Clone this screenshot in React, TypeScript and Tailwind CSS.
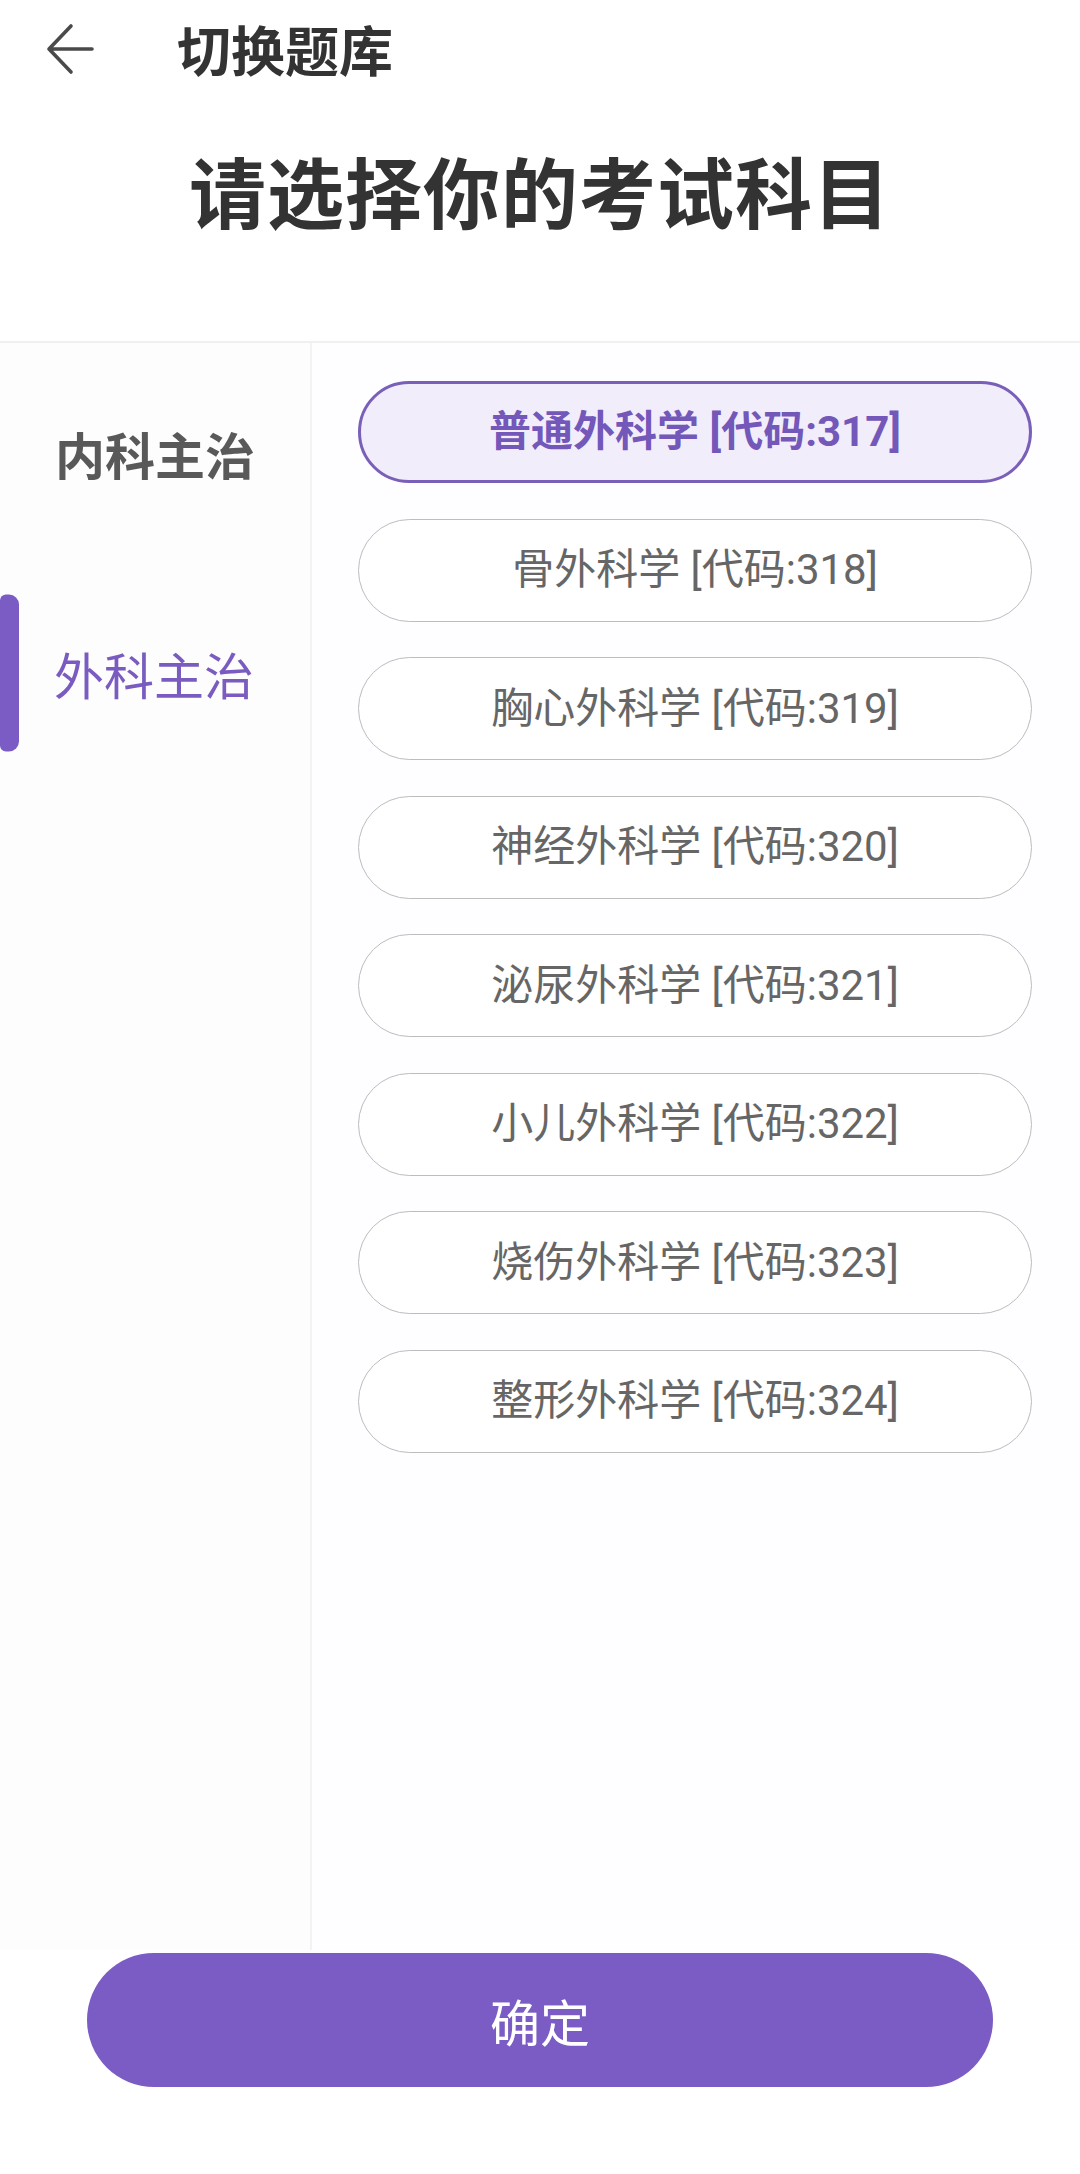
import React from "react";

const subjects = [
  "普通外科学 [代码:317]",
  "骨外科学 [代码:318]",
  "胸心外科学 [代码:319]",
  "神经外科学 [代码:320]",
  "泌尿外科学 [代码:321]",
  "小儿外科学 [代码:322]",
  "烧伤外科学 [代码:323]",
  "整形外科学 [代码:324]",
];

const pillFont = { fontFamily: 'Roboto, "Noto Sans CJK SC", sans-serif' };

export default function App() {
  return (
    <div
      className="w-[1080px] h-[2174px] bg-white flex flex-col overflow-hidden"
      style={{ fontFamily: '"Noto Sans CJK SC", "Noto Sans", sans-serif' }}
    >
      {/* top bar */}
      <div className="h-[98px] flex items-center shrink-0">
        <div className="w-[177px] pl-[46px] flex items-center">
          <svg width="48" height="52" viewBox="0 0 48 52" fill="none">
            <path
              d="M46 26 H4 M25 3 L3 26 L25 49"
              stroke="#4a4a4a"
              strokeWidth="3.6"
              strokeLinecap="round"
              strokeLinejoin="round"
            />
          </svg>
        </div>
        <div className="text-[54px] leading-none font-bold text-[#333333]">切换题库</div>
      </div>

      {/* heading */}
      <div className="h-[245px] pb-[60px] flex items-center justify-center border-b-2 border-[#f0f0f0] shrink-0">
        <div className="text-[77px] leading-none font-bold text-[#333333] tracking-[1px]">
          请选择你的考试科目
        </div>
      </div>

      {/* main */}
      <div className="flex-1 flex min-h-0">
        <div className="w-[312px] shrink-0 border-r-2 border-[#f3f3f3] bg-[#fdfdfd] flex flex-col">
          <div className="h-[220px] flex items-center pl-[55px]">
            <span className="text-[50px] leading-none font-bold text-[#595959]">内科主治</span>
          </div>
          <div className="relative h-[220px] flex items-center pl-[54px]">
            <div className="absolute left-0 top-1/2 -translate-y-1/2 h-[157px] w-[19px] rounded-r-[10px] rounded-l-[6px] bg-[#7b5cc4]" />
            <span className="text-[50px] leading-none text-[#7a5cc0]">外科主治</span>
          </div>
        </div>
        <div className="flex-1 pt-[38px] pl-[46px] pr-[48px] flex flex-col gap-[35.5px] bg-[#fefdff]">
          {subjects.map((s, i) =>
            i === 0 ? (
              <div
                key={s}
                className="h-[102px] rounded-full border-[3px] border-[#7a5fb8] bg-[#f1edfb] flex items-center justify-center"
              >
                <span className="text-[42px] leading-none font-bold text-[#7357b9]" style={pillFont}>
                  {s}
                </span>
              </div>
            ) : (
              <div
                key={s}
                className="h-[103px] rounded-full border-[1.5px] border-[#bdbdbd] bg-white flex items-center justify-center"
              >
                <span className="text-[42px] leading-none text-[#666666]" style={pillFont}>
                  {s}
                </span>
              </div>
            )
          )}
        </div>
      </div>

      {/* bottom button */}
      <div className="h-[224px] shrink-0 px-[87px] pt-[3px] pb-[87px] bg-white">
        <div className="h-full rounded-full bg-[#7b5cc4] flex items-center justify-center">
          <span className="text-[50px] leading-none text-white">确定</span>
        </div>
      </div>
    </div>
  );
}
